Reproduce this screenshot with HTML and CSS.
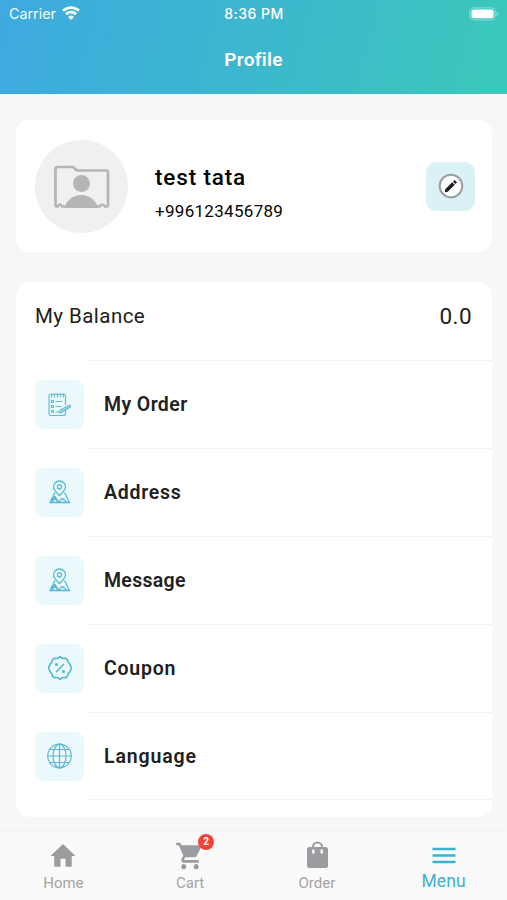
FILE: index.html
```html
<!DOCTYPE html>
<html lang="en">
<head>
<meta charset="utf-8">
<title>Profile</title>
<link rel="stylesheet" href="styles.css">
</head>
<body>
<header class="header">
  <div class="status">
    <div class="carrier"><span>Carrier</span>
      <svg width="18" height="14" viewBox="0 0 18 14" fill="none" stroke="#fff" stroke-width="2.700"><path d="M1 4.800a11.500 11.500 0 0 1 16 0M3.900 8.300a7.300 7.300 0 0 1 10.200 0"/><path d="M9 14 6.100 10.900a4.200 4.200 0 0 1 5.800 0z" fill="#fff" stroke="none"/></svg>
    </div>
    <div class="time">8:36 PM</div>
    <div class="battery">
      <svg width="30" height="14" viewBox="0 0 30 14"><rect x=".8" y=".8" width="25.400" height="12" rx="4" fill="none" stroke="#fff" stroke-opacity=".35" stroke-width="1.200"/><rect x="2.400" y="2.400" width="22.200" height="8.800" rx="2.500" fill="#fff"/><path d="M27.700 5v4q1.500-.7 1.500-2t-1.500-2z" fill="#fff" fill-opacity=".5"/></svg>
    </div>
  </div>
  <h1 class="title">Profile</h1>
</header>
<main class="content">
  <section class="card profile">
    <div class="avatar">
      <svg width="56" height="46" viewBox="0 0 56 46"><path d="M11 41.500H8q-2-4-4.500 0H2.500q-1 0-1-1V4q0-2 2-2H19l4 3.500H52q2 0 2 2V40.500q0 1-1 1H51q-3-4-5 0H42" fill="none" stroke="#b5b5b5" stroke-width="2.700" stroke-linejoin="round"/><circle cx="27.500" cy="18.500" r="8.500" fill="#b5b5b5"/><path d="M10 43c3-8 9-13 17.500-13S41 35 44.500 43z" fill="#b5b5b5"/></svg>
    </div>
    <div class="who"><div class="name">test tata</div><div class="phone">+996123456789</div></div>
    <div class="edit">
      <svg width="26" height="26" viewBox="0 0 26 26"><circle cx="13" cy="13" r="11.300" fill="#fff" stroke="#999fa1" stroke-width="2"/><path d="M8.500 17.500 15.500 10.500" stroke="#1c1c1c" stroke-width="3.600"/><path d="M16.200 9.800 17.800 8.200" stroke="#1c1c1c" stroke-width="3.400"/><path d="m6.800 19.200.4-3.200 2.800 2.800z" fill="#1c1c1c"/></svg>
    </div>
  </section>
  <section class="card list">
    <div class="balance"><span>My Balance</span><span class="amount">0.0</span></div>
    <div class="row"><div class="tile">
      <svg width="26" height="26" viewBox="0 0 26 26" fill="none" stroke="#66c2d3" stroke-width="1.200"><path d="M18.500 16V22.500q0 2-2 2H4q-2 0-2-2V4.500q0-1 1-1H17.500q1 0 1 1V14"/><path d="M4.500 2v4.500M7.500 2v4.500M10.500 2v4.500M13.500 2v4.500M16.500 2v4.500M4.500 9.500h2v2h-2zM4.500 14.500h2v2h-2zM4.500 19.500h2v2h-2zM8.500 10.500h7M8.500 15.500h6M8.500 21h6"/><path d="m12 21.500 1.500-2.500 9-5 1.200 1.800-9 5.500z" fill="#9ad7e2"/></svg>
    </div><div class="label order">My Order</div></div>
    <div class="row"><div class="tile">
      <svg width="26" height="26" viewBox="0 0 26 26" fill="none" stroke="#55b9cf" stroke-width="1.300" stroke-linejoin="round"><path d="M12.500 16.500C9 13 6.500 11 6.500 8a6 6 0 0 1 12 0c0 3-2.500 5-6 8.500z"/><circle cx="12.500" cy="8" r="2"/><path d="M8 13.500 3 23.500H22.500L17.500 13.500"/><path d="m4 22 4-4.500 3.500 5.500 4-3.500 4.500 4M5 22.500l3.500-3 2.500 3.500"/></svg>
    </div><div class="label address">Address</div></div>
    <div class="row"><div class="tile">
      <svg width="26" height="26" viewBox="0 0 26 26" fill="none" stroke="#55b9cf" stroke-width="1.300" stroke-linejoin="round"><path d="M12.500 16.500C9 13 6.500 11 6.500 8a6 6 0 0 1 12 0c0 3-2.500 5-6 8.500z"/><circle cx="12.500" cy="8" r="2"/><path d="M8 13.500 3 23.500H22.500L17.500 13.500"/><path d="m4 22 4-4.500 3.500 5.500 4-3.500 4.500 4M5 22.500l3.500-3 2.500 3.500"/></svg>
    </div><div class="label message">Message</div></div>
    <div class="row"><div class="tile">
      <svg width="26" height="26" viewBox="0 0 26 26" fill="none" stroke="#50b8d2" stroke-width="1.600" stroke-linejoin="round"><path d="M13 1.500Q14.800 3.900 17 3.400 19.500 3 20.700 5.200 20.700 7.800 22.800 9 23.500 11 24.500 13 23.500 15 22.800 17 20.700 18.200 20.700 20.800 19.500 23 17 22.600 14.800 22.100 13 24.500 11.200 22.100 9 22.600 6.500 23 5.300 20.800 5.300 18.200 3.200 17 2.500 15 1.500 13 2.500 11 3.200 9 5.300 7.800 5.300 5.200 6.500 3 9 3.400 11.200 3.900 13 1.500z"/><path d="m9 17 8-8"/><circle cx="9.500" cy="9.500" r=".8"/><circle cx="16.500" cy="16.500" r=".8"/></svg>
    </div><div class="label coupon">Coupon</div></div>
    <div class="row"><div class="tile">
      <svg width="26" height="26" viewBox="0 0 26 26" fill="none" stroke="#5bbbd1" stroke-width="1.200"><circle cx="12.500" cy="13" r="11.800"/><ellipse cx="12.500" cy="13" rx="6.500" ry="11.800"/><path d="M12.500 1v24M.5 13h24M3 6.500h19M3 19.500h19"/></svg>
    </div><div class="label language">Language</div></div>
    <div class="end"></div>
  </section>
</main>
<nav class="tabs">
  <div class="tab"><svg width="30" height="32" viewBox="0 0 24 24" preserveAspectRatio="none" fill="#9a9c9f"><path d="M10 20v-6h4v6h5v-8h3L12 3 2 12h3v8z"/></svg><span class="home">Home</span></div>
  <div class="tab"><div class="cart"><svg width="30" height="32" viewBox="0 0 24 24" preserveAspectRatio="none" fill="#9a9c9f"><path d="M7 18c-1.100 0-1.990.9-1.990 2S5.900 22 7 22s2-.9 2-2-.9-2-2-2zM1 2v2h2l3.600 7.590-1.350 2.450c-.16.280-.25.610-.25.960 0 1.100.9 2 2 2h12v-2H7.420c-.14 0-.25-.11-.25-.25l.03-.12.900-1.630h7.450c.75 0 1.410-.41 1.750-1.030l3.580-6.490A1 1 0 0 0 20 4H5.210l-.94-2H1zm16 16c-1.100 0-1.990.9-1.990 2s.89 2 1.990 2 2-.9 2-2-.9-2-2-2z"/></svg><b class="badge">2</b></div><span class="cart-label">Cart</span></div>
  <div class="tab"><svg width="32" height="32" viewBox="0 0 32 32"><path d="M12 10V7a4.500 4.500 0 0 1 9 0v3" fill="none" stroke="#9a9c9f" stroke-width="2"/><rect x="6" y="7" width="21" height="21" rx="2.500" fill="#9a9c9f"/><path d="M12.300 10.500v2M20.700 10.500v2" stroke="#fafafa" stroke-width="2.400" stroke-linecap="round"/><path d="M14 7a2.500 2.500 0 0 1 5 0z" fill="#fafafa"/></svg><span class="order-label">Order</span></div>
  <div class="tab active"><svg width="32" height="32" viewBox="0 0 32 32" stroke="#3db1d0" stroke-width="2.500"><path d="M4.500 9h23M4.500 15.500h23M4.500 22h23"/></svg><span>Menu</span></div>
</nav>
</body>
</html>
```

FILE: styles.css
```css
* { box-sizing: border-box; }
body { margin: 0; width: 507px; height: 900px; overflow: hidden; display: flex; flex-direction: column; background: #f7f7f7; color: #202020; font-family: Roboto, "Liberation Sans", sans-serif; }
svg { display: block; flex: none; }
.header { height: 94px; flex: none; background: linear-gradient(105deg, #3eaae0, #3cb8cd 52%, #3bc8ba); color: #fff; }
.status { height: 28px; display: grid; grid-template-columns: 1fr auto 1fr; align-items: center; padding: 0 8px 0 9px; font: 14.3px/28px Inter, sans-serif; }
.carrier { display: flex; align-items: center; gap: 6px; opacity: .95; }
.carrier svg { margin-top: -2px; }
.time { font-weight: 500; font-size: 14px; letter-spacing: .5px; }
.battery { display: flex; justify-content: flex-end; }
.title { margin: 19px 0 0; text-align: center; font-size: 19px; line-height: 25px; font-weight: 600; letter-spacing: .3px; }
.content { flex: 1; padding: 26px 15px 0 16px; }
.card { background: #fff; border-radius: 14px; }
.profile { height: 132px; padding: 0 17px 0 19px; display: flex; align-items: center; }
.avatar { width: 93px; height: 93px; border-radius: 50%; background: #f0f0f0; display: flex; align-items: center; justify-content: center; padding-top: 3px; }
.who { margin-left: 27px; flex: 1; padding-top: 13px; color: #050505; }
.name { font-size: 22.5px; line-height: 28px; font-weight: 500; letter-spacing: .85px; }
.phone { margin-top: 8px; font-size: 17px; line-height: 24px; letter-spacing: .3px; }
.edit { width: 49px; height: 49px; border-radius: 11px; background: #daf1f5; display: flex; align-items: center; justify-content: center; }
.list { height: 535px; margin-top: 30px; }
.balance { height: 78px; display: flex; justify-content: space-between; padding: 20px 20px 0 19px; font-size: 20.5px; line-height: 28px; letter-spacing: .45px; }
.amount { font-size: 22.5px; }
.row { height: 88px; display: flex; align-items: center; padding-left: 19px; background: linear-gradient(#f3f3f3, #f3f3f3) 70px 0 / 100% 1px no-repeat; }
.tile { width: 49px; height: 49px; border-radius: 9px; background: #ebf8fc; display: flex; align-items: center; justify-content: center; }
.label { margin-left: 20px; font-size: 19.5px; font-weight: 600; letter-spacing: .3px; }
.order { letter-spacing: .4px; }
.address, .coupon { letter-spacing: .75px; }
.language { letter-spacing: .85px; }
.end { height: 1px; margin: -1px 0 0 73px; background: #f3f3f3; }
.tabs { height: 68px; flex: none; display: grid; grid-template-columns: repeat(4, 1fr); background: #fafafa; box-shadow: 0 0 4px #0000000c; }
.tab { display: flex; flex-direction: column; align-items: center; padding-top: 8px; color: #a4a4a4; font-size: 15px; line-height: 20px; }
.tab > span { margin-top: 1px; }
.cart { position: relative; }
.badge { position: absolute; left: 23px; top: -6px; width: 16px; height: 16px; border-radius: 50%; background: #f44336; color: #fff; font-size: 10px; line-height: 16px; text-align: center; }
.active { color: #3db1d0; font-size: 17.5px; letter-spacing: .1px; }
.active > span { margin-top: -1px; }
```
